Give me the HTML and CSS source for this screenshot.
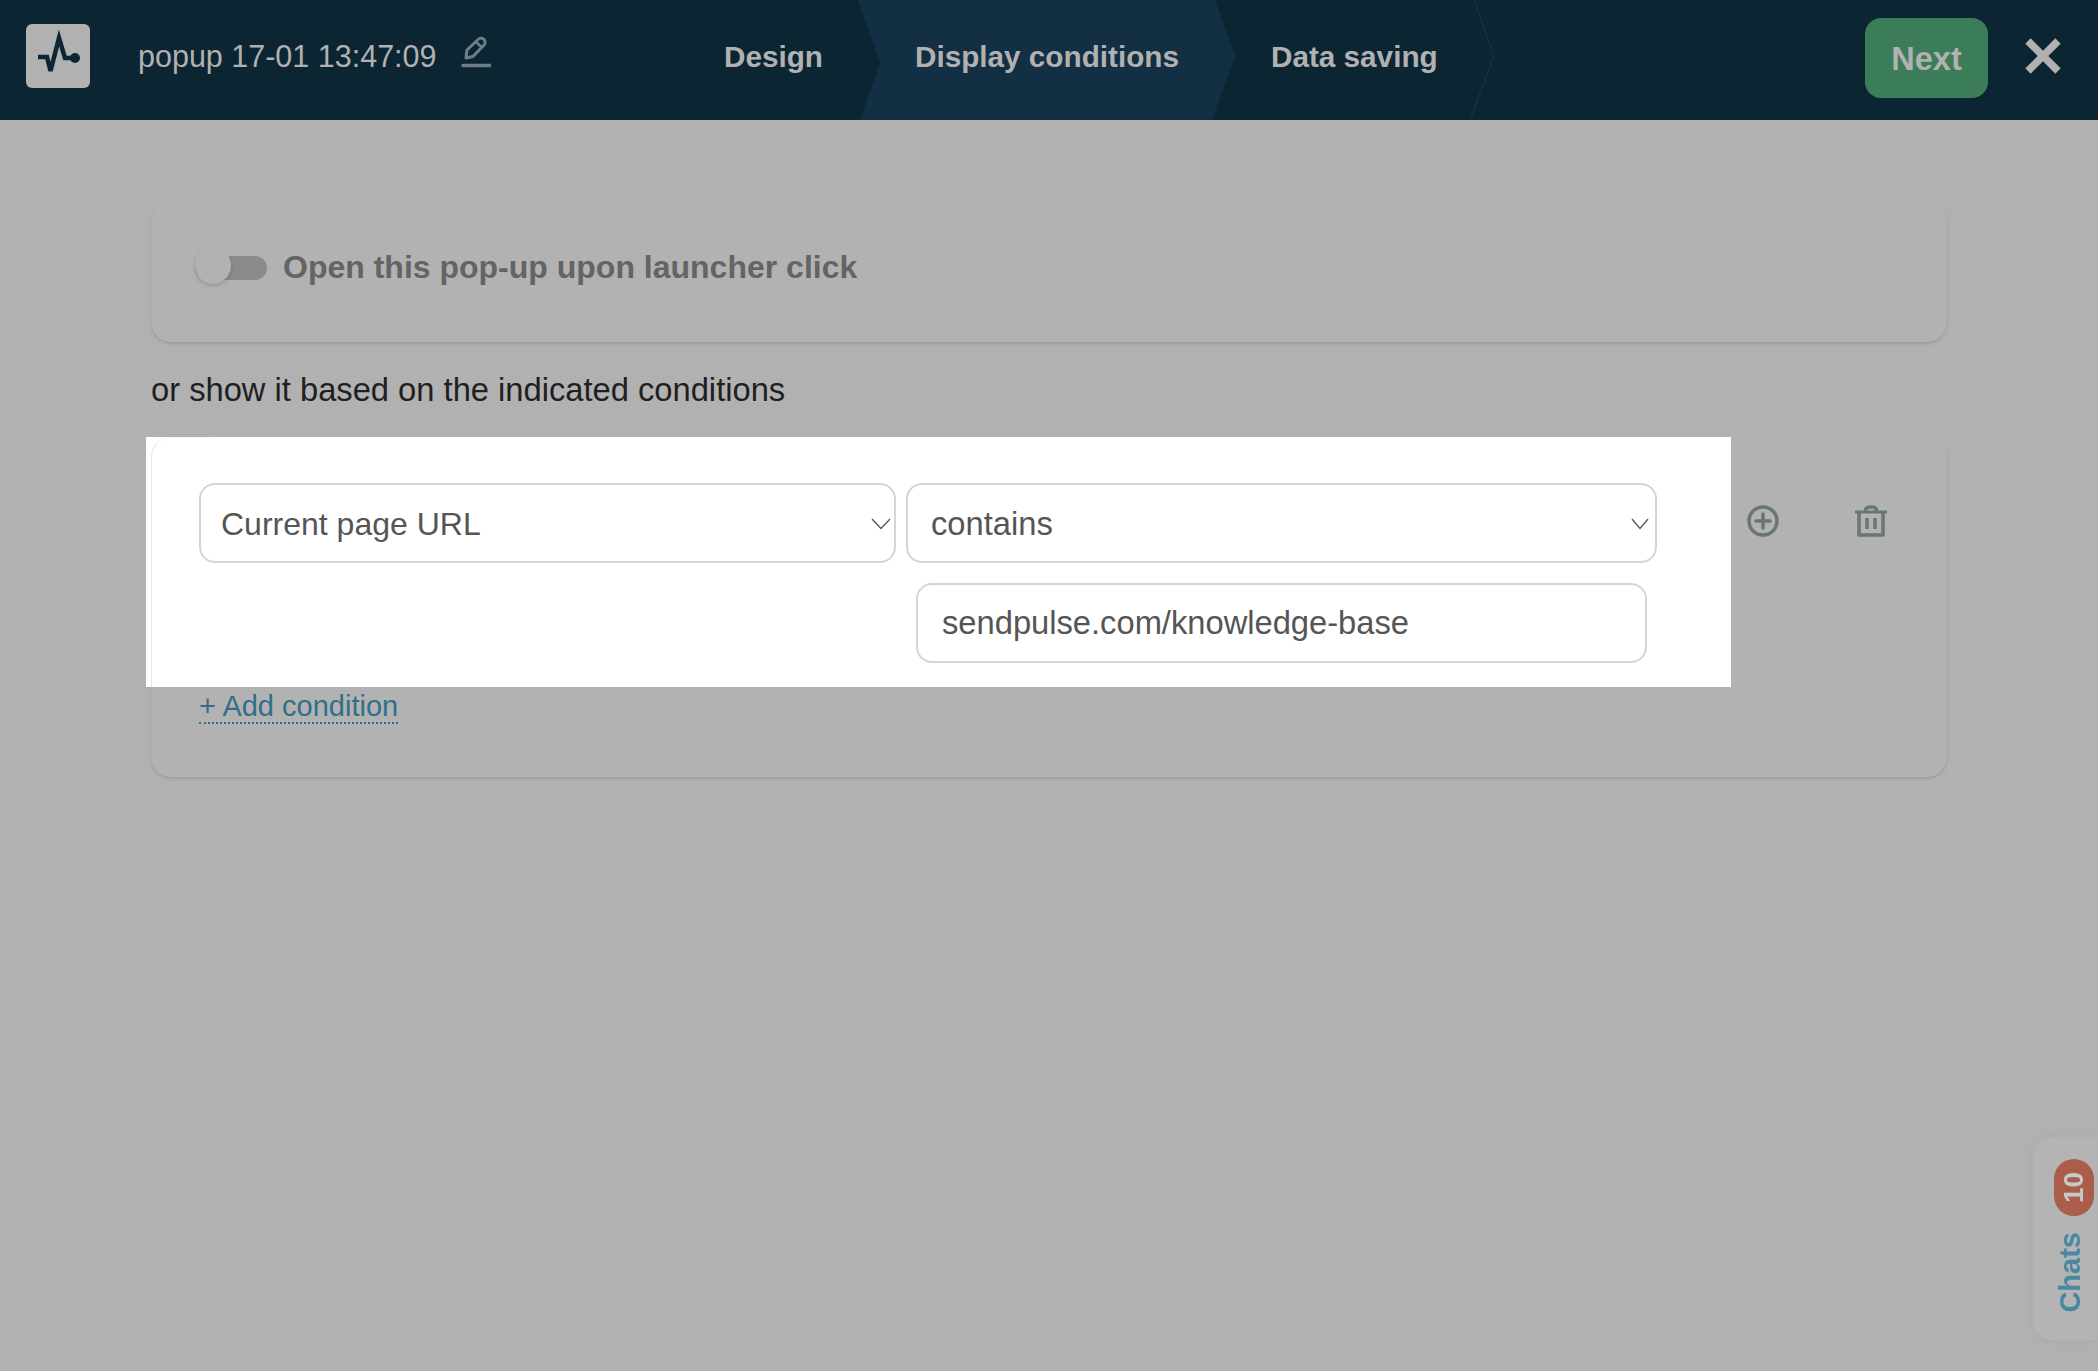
FILE: index.html
```html
<!DOCTYPE html>
<html lang="en">
<head>
<meta charset="utf-8">
<title>popup 17-01 13:47:09</title>
<link rel="stylesheet" href="styles.css">
</head>
<body>
<header class="topbar">
  <div class="logo">
    <svg width="64" height="64" viewBox="0 0 64 64" fill="none"><path d="M12 33H21L24.500 47L33 14L39 34H47" stroke="#0c2533" stroke-width="4.500"/><circle cx="49" cy="34" r="5" fill="#0c2533"/></svg>
  </div>
  <div class="title">popup 17-01 13:47:09</div>
  <svg class="pencil" width="30" height="32" viewBox="0 0 30 32" fill="none" stroke="#6e7f87"><path d="M5 22L6 14L17 3.500C19 1.500 21.500 2 23 3.500C24.500 5 24.500 7.500 23 9L12 20.500Z" stroke-width="3" stroke-linejoin="round"/><path d="M15 6L21 11.500" stroke-width="2.500"/><path d="M2 29.500H29" stroke-width="3.500" stroke-linecap="round"/></svg>
  <nav class="steps">
    <div class="step step-first">Design</div>
    <div class="step step-active">Display conditions</div>
    <div class="step step-last">Data saving
      <svg class="step-edge" width="26" height="120" viewBox="0 0 26 120" fill="none"><path d="M4 0L24 56L0 120" stroke="#17303f" stroke-width="1.500"/></svg>
    </div>
  </nav>
  <button class="next">Next</button>
  <svg class="close" width="38" height="38" viewBox="0 0 38 38" fill="none"><path d="M4 4L34 34M34 4L4 34" stroke="#b1b1b1" stroke-width="7.500"/></svg>
</header>
<main class="content">
  <section class="card card-toggle">
    <span class="toggle"><span class="knob"></span></span>
    <span class="toggle-label">Open this pop-up upon launcher click</span>
  </section>
  <p class="hint">or show it based on the indicated conditions</p>
  <section class="card card-conditions">
    <div class="highlight"><div class="highlight-edge"></div></div>
    <div class="rule">
      <div class="field-row">
        <div class="field select select-a">Current page URL
          <svg class="chev chev-a" width="20" height="12" viewBox="0 0 20 12" fill="none"><path d="M1 1L10 10.500L19 1" stroke="#555" stroke-width="1.300"/></svg>
        </div>
        <div class="field select select-b">contains
          <svg class="chev" width="20" height="12" viewBox="0 0 20 12" fill="none"><path d="M2 1L10 10.500L18 1" stroke="#555" stroke-width="1.300"/></svg>
        </div>
      </div>
      <div class="field value">sendpulse.com/knowledge-base</div>
    </div>
    <div class="actions">
      <svg width="32" height="32" viewBox="0 0 32 32" fill="none" stroke="#687676" stroke-width="3.500"><circle cx="16" cy="16" r="14"/><path d="M9 16H23M16 9V23" stroke-linecap="round"/></svg>
      <svg width="32" height="32" viewBox="0 0 32 32" fill="none" stroke="#687676" stroke-width="3.500"><path d="M0 7H32" stroke-width="3"/><path d="M10.500 7V5C10.500 1 21.500 1 21.500 5V7"/><path d="M4 7V30H28V7" stroke-linejoin="round"/><path d="M12 13V24M20 13V24"/></svg>
    </div>
    <div class="add-wrap"><a class="add" href="#">+ Add condition</a></div>
  </section>
</main>
<aside class="chats">
  <span class="badge">10</span>
  <span class="chats-label">Chats</span>
</aside>
</body>
</html>
```
FILE: styles.css
```css
* { box-sizing: border-box; }
html, body { margin: 0; height: 1371px; overflow: hidden; }
body { background: #b1b1b1; font-family: "Liberation Sans", Arial, sans-serif; color: #1f1f1f; }

.topbar { height: 120px; background: #0c2533; display: flex; align-items: center; color: #b1b1b1; }
.logo { width: 64px; height: 64px; margin-left: 26px; margin-top: -8px; border-radius: 6px; background: #b1b1b1; display: flex; }
.title { margin-left: 48px; font-size: 30.500px; margin-top: -8px; width: 299px; white-space: nowrap; }
.pencil { margin-left: 24px; margin-top: -16px; }
.steps { display: flex; height: 120px; margin-left: 233px; font-size: 29.700px; font-weight: 700; }
.step { display: flex; align-items: center; padding-bottom: 7px; white-space: nowrap; position: relative; }
.step-first { width: 134px; }
.step-active { width: 377px; padding-left: 57px; background: #132f44; clip-path: polygon(0 0, 357px 0, 377px 56px, 354px 100%, 2px 100%, 22px 63px); }
.step-last { padding-left: 36px; width: 261px; }
.step-edge { position: absolute; right: 0; top: 0; }
.next { margin-left: auto; margin-top: -4px; width: 123px; height: 80px; border: 0; border-radius: 16px; background: #3a7d58; color: #b1b1b1; font: 700 32.500px "Liberation Sans", Arial, sans-serif; padding: 2px 0 0; }
.close { margin: -8px 36px 0 36px; }

.content { padding: 80px 151px 0; }
.card { background: #b2b2b2; border-radius: 20px; box-shadow: 0 2px 3px rgba(0, 0, 0, .1), 0 0 1px rgba(0, 0, 0, .08); }
.card-toggle { height: 142px; padding: 47px 44px 0; display: flex; align-items: flex-start; gap: 16px; }
.toggle { width: 72px; height: 24px; margin-top: 9px; border-radius: 12px; background: #8b8b8b; position: relative; flex: none; }
.knob { position: absolute; left: 0; top: -9px; width: 36px; height: 37px; border-radius: 50%; background: #b2b2b2; box-shadow: 0 2px 4px rgba(0, 0, 0, .16); }
.toggle-label { font-size: 32px; font-weight: 700; color: #646464; line-height: 40px; }
.hint { margin: 30px 0 27px; font-size: 32.700px; line-height: 36px; }

.card-conditions { position: relative; height: 342px; padding: 48px; display: grid; grid-template-columns: 1458px 1fr; grid-template-rows: 180px auto; }
.highlight { position: absolute; left: -5px; top: 2px; width: 1585px; height: 250px; background: #fff; overflow: hidden; }
.highlight-edge { position: absolute; left: 5px; top: 0; width: 60px; height: 300px; border-left: 1px solid #e4e8e8; border-top: 1px solid #f2f4f4; border-radius: 20px 0 0 0; }
.rule { position: relative; display: flex; flex-direction: column; align-items: flex-start; gap: 20px; }
.field-row { display: flex; gap: 10px; }
.field { height: 80px; border: 2px solid #d0d6d6; border-radius: 16px; background: #fff; color: #555; font-size: 32.700px; display: flex; align-items: center; position: relative; white-space: nowrap; }
.select { padding-top: 2px; }
.select-a { width: 697px; padding-left: 20px; font-size: 32px; }
.select-b { width: 751px; padding-left: 23px; }
.value { width: 731px; margin-left: 717px; padding-left: 24px; }
.chev { position: absolute; right: 5px; top: 33px; }
.chev-a { right: 3px; }
.actions { position: relative; display: flex; gap: 76px; margin: 22px 0 0 90px; align-items: flex-start; }
.add-wrap { grid-column: 1 / -1; position: relative; margin-top: 27px; }
.add { font-size: 29px; color: #2f7088; text-decoration: none; border-bottom: 2px dotted #2f7088; }

.chats { position: fixed; right: 0; top: 1137px; width: 65px; height: 203px; background: #b4b4b4; border-radius: 20px 0 0 20px; box-shadow: 0 0 14px rgba(0, 0, 0, .04); display: flex; flex-direction: column; align-items: center; }
.badge { margin: 22px 0 0 16px; width: 40px; height: 57px; border-radius: 20px; background: #a95d4a; color: #c9c9c9; font-size: 28px; font-weight: 700; writing-mode: vertical-rl; transform: rotate(180deg); display: flex; align-items: center; justify-content: center; }
.chats-label { margin: 16px 0 0 9px; color: #4a87a0; font-size: 29px; font-weight: 700; writing-mode: vertical-rl; transform: rotate(180deg); }
```
